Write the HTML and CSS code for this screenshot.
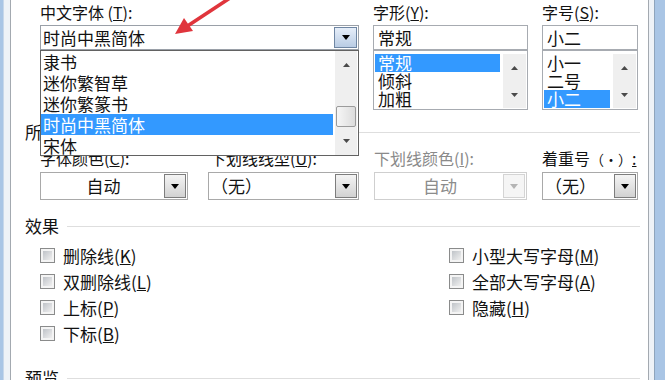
FILE: index.html
```html
<!DOCTYPE html>
<html lang="zh-CN">
<head>
<meta charset="utf-8">
<title>字体</title>
<link rel="stylesheet" href="styles.css">
</head>
<body>
<div class="window">
  <div class="frame-left"></div>
  <div class="panel">
    <div class="top-grid">
      <div class="field">
        <div class="label">中文字体 (<span class="u">T</span>):</div>
        <div class="combo combo-main">
          <span class="combo-text">时尚中黑简体</span>
          <span class="drop-btn drop-btn-hot">
            <svg width="8" height="5" viewBox="0 0 8 5"><path d="M0 0h8L4 5z" fill="#000"/></svg>
          </span>
          <div class="popup">
            <div class="popup-items">
              <div class="item">隶书</div>
              <div class="item">迷你繁智草</div>
              <div class="item">迷你繁篆书</div>
              <div class="item selected">时尚中黑简体</div>
              <div class="item">宋体</div>
            </div>
            <div class="vscroll vscroll-popup">
              <div class="sbtn"><svg width="7" height="4" viewBox="0 0 7 4"><path d="M0 4h7L3.5 0z" fill="#4a4a4a"/></svg></div>
              <div class="track"><div class="thumb"></div></div>
              <div class="sbtn"><svg width="7" height="4" viewBox="0 0 7 4"><path d="M0 0h7L3.5 4z" fill="#4a4a4a"/></svg></div>
            </div>
          </div>
        </div>
      </div>
      <div class="field">
        <div class="label">字形(<span class="u">Y</span>):</div>
        <div class="textbox">常规</div>
        <div class="listbox">
          <div class="list-items">
            <div class="litem selected">常规</div>
            <div class="litem">倾斜</div>
            <div class="litem">加粗</div>
          </div>
          <div class="vscroll vscroll-small">
            <div class="sbtn"><svg width="7" height="4" viewBox="0 0 7 4"><path d="M0 4h7L3.5 0z" fill="#4a4a4a"/></svg></div>
            <div class="sbtn"><svg width="7" height="4" viewBox="0 0 7 4"><path d="M0 0h7L3.5 4z" fill="#4a4a4a"/></svg></div>
          </div>
        </div>
      </div>
      <div class="field">
        <div class="label">字号(<span class="u">S</span>):</div>
        <div class="textbox">小二</div>
        <div class="listbox">
          <div class="list-items">
            <div class="litem">小一</div>
            <div class="litem">二号</div>
            <div class="litem selected">小二</div>
          </div>
          <div class="vscroll vscroll-small">
            <div class="sbtn"><svg width="7" height="4" viewBox="0 0 7 4"><path d="M0 4h7L3.5 0z" fill="#4a4a4a"/></svg></div>
            <div class="sbtn"><svg width="7" height="4" viewBox="0 0 7 4"><path d="M0 0h7L3.5 4z" fill="#4a4a4a"/></svg></div>
          </div>
        </div>
      </div>
    </div>

    <div class="group group-all"><span>所有文字</span></div>

    <div class="row2">
      <div class="label">字体颜色(<span class="u">C</span>):</div>
      <div class="label label-shift">下划线线型(<span class="u">U</span>):</div>
      <div class="label label-disabled">下划线颜色(<span class="u">I</span>):</div>
      <div class="label">着重号<span class="dot">（·）</span><span class="u">:</span></div>
    </div>
    <div class="row2 row2-combos">
      <div class="combo combo-lg w1">
        <span class="combo-text center">自动</span>
        <span class="drop-btn"><svg width="8" height="5" viewBox="0 0 8 5"><path d="M0 0h8L4 5z" fill="#000"/></svg></span>
      </div>
      <div class="combo combo-lg w2">
        <span class="combo-text">（无）</span>
        <span class="drop-btn"><svg width="8" height="5" viewBox="0 0 8 5"><path d="M0 0h8L4 5z" fill="#000"/></svg></span>
      </div>
      <div class="combo combo-lg w3 disabled">
        <span class="combo-text center">自动</span>
        <span class="drop-btn"><svg width="8" height="5" viewBox="0 0 8 5"><path d="M0 0h8L4 5z" fill="#b4b4b4"/></svg></span>
      </div>
      <div class="combo combo-lg w4">
        <span class="combo-text">（无）</span>
        <span class="drop-btn"><svg width="8" height="5" viewBox="0 0 8 5"><path d="M0 0h8L4 5z" fill="#000"/></svg></span>
      </div>
    </div>

    <div class="group group-effects"><span>效果</span></div>
    <div class="effects">
      <div class="col">
        <div class="check"><span class="box"></span>删除线(<span class="u">K</span>)</div>
        <div class="check"><span class="box"></span>双删除线(<span class="u">L</span>)</div>
        <div class="check"><span class="box"></span>上标(<span class="u">P</span>)</div>
        <div class="check"><span class="box"></span>下标(<span class="u">B</span>)</div>
      </div>
      <div class="col">
        <div class="check"><span class="box"></span>小型大写字母(<span class="u">M</span>)</div>
        <div class="check"><span class="box"></span>全部大写字母(<span class="u">A</span>)</div>
        <div class="check"><span class="box"></span>隐藏(<span class="u">H</span>)</div>
      </div>
    </div>

    <div class="group group-preview"><span>预览</span></div>
  </div>
  <div class="frame-right"></div>
</div>

<svg class="annotation" width="665" height="380" viewBox="0 0 665 380">
  <line x1="233" y1="-4" x2="189" y2="25" stroke="#e0353c" stroke-width="3.6" stroke-linecap="round"/>
  <polygon points="175,34 193,31 184,18" fill="#e0353c"/>
</svg>
</body>
</html>
```

FILE: styles.css
```css
* {
  box-sizing: border-box;
}

html,
body {
  margin: 0;
  padding: 0;
}

body {
  width: 665px;
  height: 380px;
  overflow: hidden;
  position: relative;
  background: #ffffff;
  color: #121212;
  font-family: "Noto Sans CJK SC", "Noto Sans", sans-serif;
}

.window {
  display: flex;
  height: 380px;
}

.frame-left {
  flex: none;
  width: 10px;
  background: linear-gradient(to right, #a9c5e5 0 3px, #c7d7ea 3px 4px, #eef2f7 4px 10px);
}

.panel {
  flex: none;
  width: 639px;
  border-left: 1px solid #a3a9b0;
  border-right: 1px solid #a3a9b0;
  background: #ffffff;
  padding: 2px 8px 0 14px;
}

.frame-right {
  flex: 1;
  background: linear-gradient(to right, #eef2f7 0 5px, #8ea4bc 5px 6px, #a9c5e5 6px);
}

/* ---------- top row ---------- */
.top-grid {
  display: grid;
  grid-template-columns: 319px 155px 96px;
  column-gap: 14px;
  margin-left: 15px;
  height: 110px;
}

.label {
  font-size: 16px;
  line-height: 20px;
  height: 20px;
  white-space: nowrap;
}

.top-grid .label {
  margin-bottom: 3px;
}

.u {
  text-decoration: underline;
  text-underline-offset: 1px;
}

.dot {
  font-size: 14px;
}

.textbox {
  height: 25px;
  border: 1px solid #a7abb1;
  font-size: 17px;
  line-height: 23px;
  padding-left: 4px;
  white-space: nowrap;
}

.combo {
  position: relative;
  display: flex;
  align-items: center;
  border: 1px solid #9aa0a8;
  background: #ffffff;
}

.combo-main {
  height: 25px;
}

.combo-text {
  flex: 1;
  font-size: 17px;
  line-height: 22px;
  padding-left: 2px;
  white-space: nowrap;
}

.combo-text.center {
  text-align: center;
}

.drop-btn {
  flex: none;
  width: 23px;
  height: 21px;
  margin-right: 1px;
  display: flex;
  align-items: center;
  justify-content: center;
  border: 1px solid #7d7d7d;
  background: linear-gradient(#f4f4f4, #d2d2d2);
}

.drop-btn-hot {
  border-color: #6f86a3;
  background: linear-gradient(#e6eef9, #b9cce4);
}

/* open dropdown list */
.popup {
  position: absolute;
  left: -1px;
  top: 24px;
  width: 319px;
  height: 106px;
  border: 1px solid #626262;
  background: #ffffff;
  display: flex;
  z-index: 2;
}

.popup-items {
  flex: 1;
}

.item {
  height: 21px;
  font-size: 17px;
  line-height: 21px;
  padding-left: 2px;
  margin-right: 2px;
  white-space: nowrap;
}

.item.selected,
.litem.selected {
  background: #3399ff;
  color: #ffffff;
}

.vscroll {
  flex: none;
  display: flex;
  flex-direction: column;
  background: #efefef;
}

.vscroll-popup {
  width: 22px;
  margin-right: 1px;
}

.sbtn {
  display: flex;
  align-items: center;
  justify-content: center;
  height: 28px;
}

.track {
  flex: 1;
  display: flex;
  flex-direction: column;
  justify-content: flex-end;
  padding: 0 1px;
}

.thumb {
  height: 21px;
  border: 1px solid #9b9b9b;
  border-radius: 2px;
  background: linear-gradient(to right, #f6f6f6, #dcdcdc);
}

/* small list boxes */
.listbox {
  height: 60px;
  border: 1px solid #a7abb1;
  display: flex;
  background: #ffffff;
}

.list-items {
  flex: 1;
  padding-top: 3px;
}

.litem {
  height: 18px;
  font-size: 17px;
  line-height: 18px;
  padding-left: 3px;
  margin: 0 3px 0 1px;
  white-space: nowrap;
}

.vscroll-small {
  width: 23px;
  margin: 3px 1px 1px 0;
}

.vscroll-small .sbtn {
  flex: 1;
  height: auto;
}

/* ---------- groups ---------- */
.group {
  display: flex;
  align-items: center;
  height: 20px;
  font-size: 17px;
  line-height: 20px;
  white-space: nowrap;
}

.group::after {
  content: "";
  flex: 1;
  height: 1px;
  margin-left: 8px;
  background: #dedede;
}

.group-all {
  margin-top: 10px;
}

.group-effects {
  margin-top: 16px;
}

.group-preview {
  margin-top: 22px;
}

/* ---------- second row ---------- */
.row2 {
  display: grid;
  grid-template-columns: 168px 166px 168px 96px;
  margin-left: 15px;
  margin-top: 6px;
}

.row2-combos {
  margin-top: 4px;
}

.label-shift {
  padding-left: 2px;
}

.label-disabled {
  color: #8a8a8a;
}

.combo-lg {
  height: 28px;
  border-color: #a9a9a9;
}

.combo-lg .drop-btn {
  height: 24px;
  width: 22px;
}

.w1 {
  width: 148px;
}

.w2 {
  width: 151px;
}

.w3 {
  width: 153px;
}

.w4 {
  width: 96px;
}

.combo.disabled {
  border-color: #cfcfcf;
  color: #8c8c8c;
}

.combo.disabled .drop-btn {
  border-color: #d4d4d4;
  background: #f5f5f5;
}

/* ---------- effects ---------- */
.effects {
  display: grid;
  grid-template-columns: 409px auto;
  margin-left: 15px;
  margin-top: 6px;
}

.check {
  display: flex;
  align-items: center;
  height: 26px;
  font-size: 17px;
  white-space: nowrap;
}

.box {
  flex: none;
  width: 15px;
  height: 15px;
  margin-right: 8px;
  border: 1px solid #8a8b8b;
  padding: 2px;
  background: #f4f4f4;
}

.box::before {
  content: "";
  display: block;
  width: 100%;
  height: 100%;
  background: linear-gradient(135deg, #bfc3c8, #f0f0f0);
}

/* ---------- annotation arrow ---------- */
.annotation {
  position: absolute;
  left: 0;
  top: 0;
  pointer-events: none;
}
```
